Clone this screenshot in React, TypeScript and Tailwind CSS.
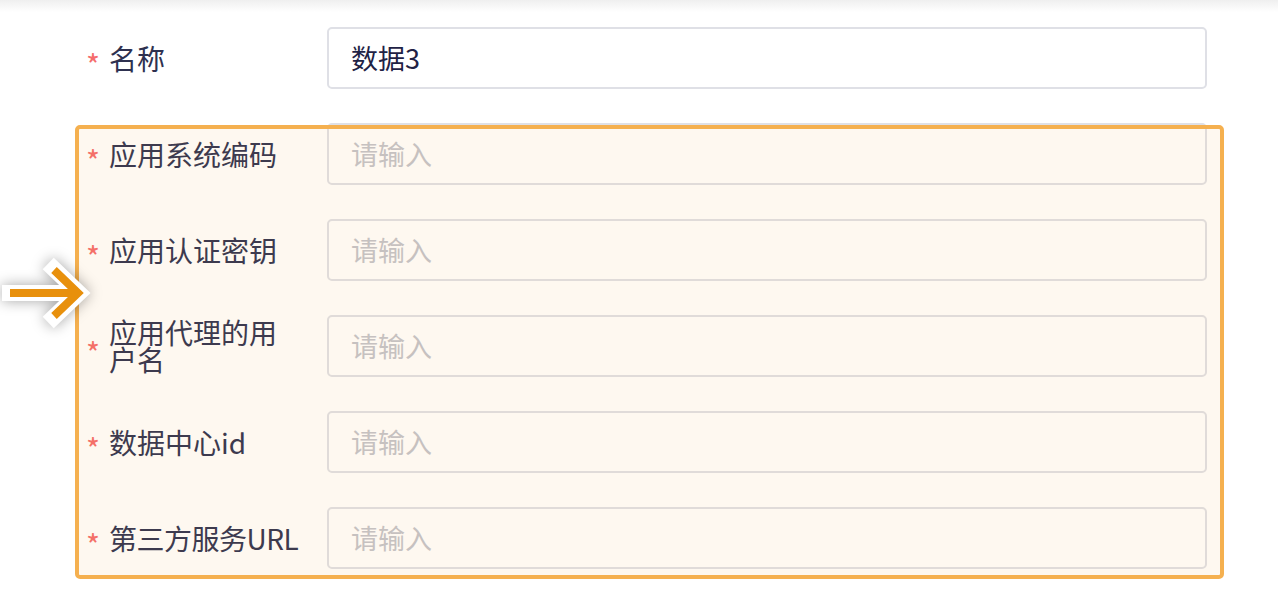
const fields = [
  { label: "名称", value: "数据3" },
  { label: "应用系统编码" },
  { label: "应用认证密钥" },
  { label: "应用代理的用户名" },
  { label: "数据中心id" },
  { label: "第三方服务URL", nowrap: true },
];

function Arrow() {
  return (
    <svg
      className="absolute left-0 top-[250px] drop-shadow-[0_0_7px_rgba(0,0,0,0.35)]"
      width="100"
      height="90"
      viewBox="0 0 100 90"
    >
      <g fill="none" stroke="#ffffff" strokeWidth="16" strokeLinejoin="miter">
        <path d="M10 43 H74" strokeLinecap="square" />
        <path d="M54 19 L79 43 L54 67" strokeLinecap="square" />
      </g>
      <g fill="none" stroke="#e8900c" strokeWidth="8" strokeLinejoin="miter">
        <path d="M10 43 H74" />
        <path d="M54 20 L78 43 L54 66" />
      </g>
    </svg>
  );
}

export default function App() {
  return (
    <div
      className="relative h-[591px] w-[1278px] overflow-hidden bg-white"
      style={{ fontFamily: '"Noto Sans CJK SC", "Noto Sans", sans-serif' }}
    >
      <div className="h-[12px] bg-gradient-to-b from-[#efefef] to-white" />
      <div className="flex flex-col pt-[15px] pl-[86px] pr-[71px]">
        {fields.map((f) => (
          <div key={f.label} className="mb-[34px] flex h-[62px] items-center">
            <div className="flex w-[241px] items-center">
              <span className="w-[23px] pt-[12px] text-[30px] leading-none text-[#f56c6c]">
                *
              </span>
              <span
                className={
                  f.nowrap
                    ? "w-[193px] whitespace-nowrap text-[28px] leading-[27px] tracking-[-0.5px] text-[#2e3150]"
                    : "w-[193px] text-[28px] leading-[27px] text-[#2e3150]"
                }
              >
                {f.label}
              </span>
            </div>
            <div className="flex h-[62px] flex-1 items-center rounded-[5px] border-2 border-[#dfe0e6] px-[22px] text-[27px]">
              {f.value ? (
                <span className="text-[#1f2245]">{f.value}</span>
              ) : (
                <span className="text-[#c3c4cb]">请输入</span>
              )}
            </div>
          </div>
        ))}
      </div>
      <div className="absolute left-[75px] top-[125px] h-[454px] w-[1149px] rounded-[5px] border-4 border-[#f5b04f] bg-[rgba(245,170,60,0.08)]" />
      <Arrow />
    </div>
  );
}
